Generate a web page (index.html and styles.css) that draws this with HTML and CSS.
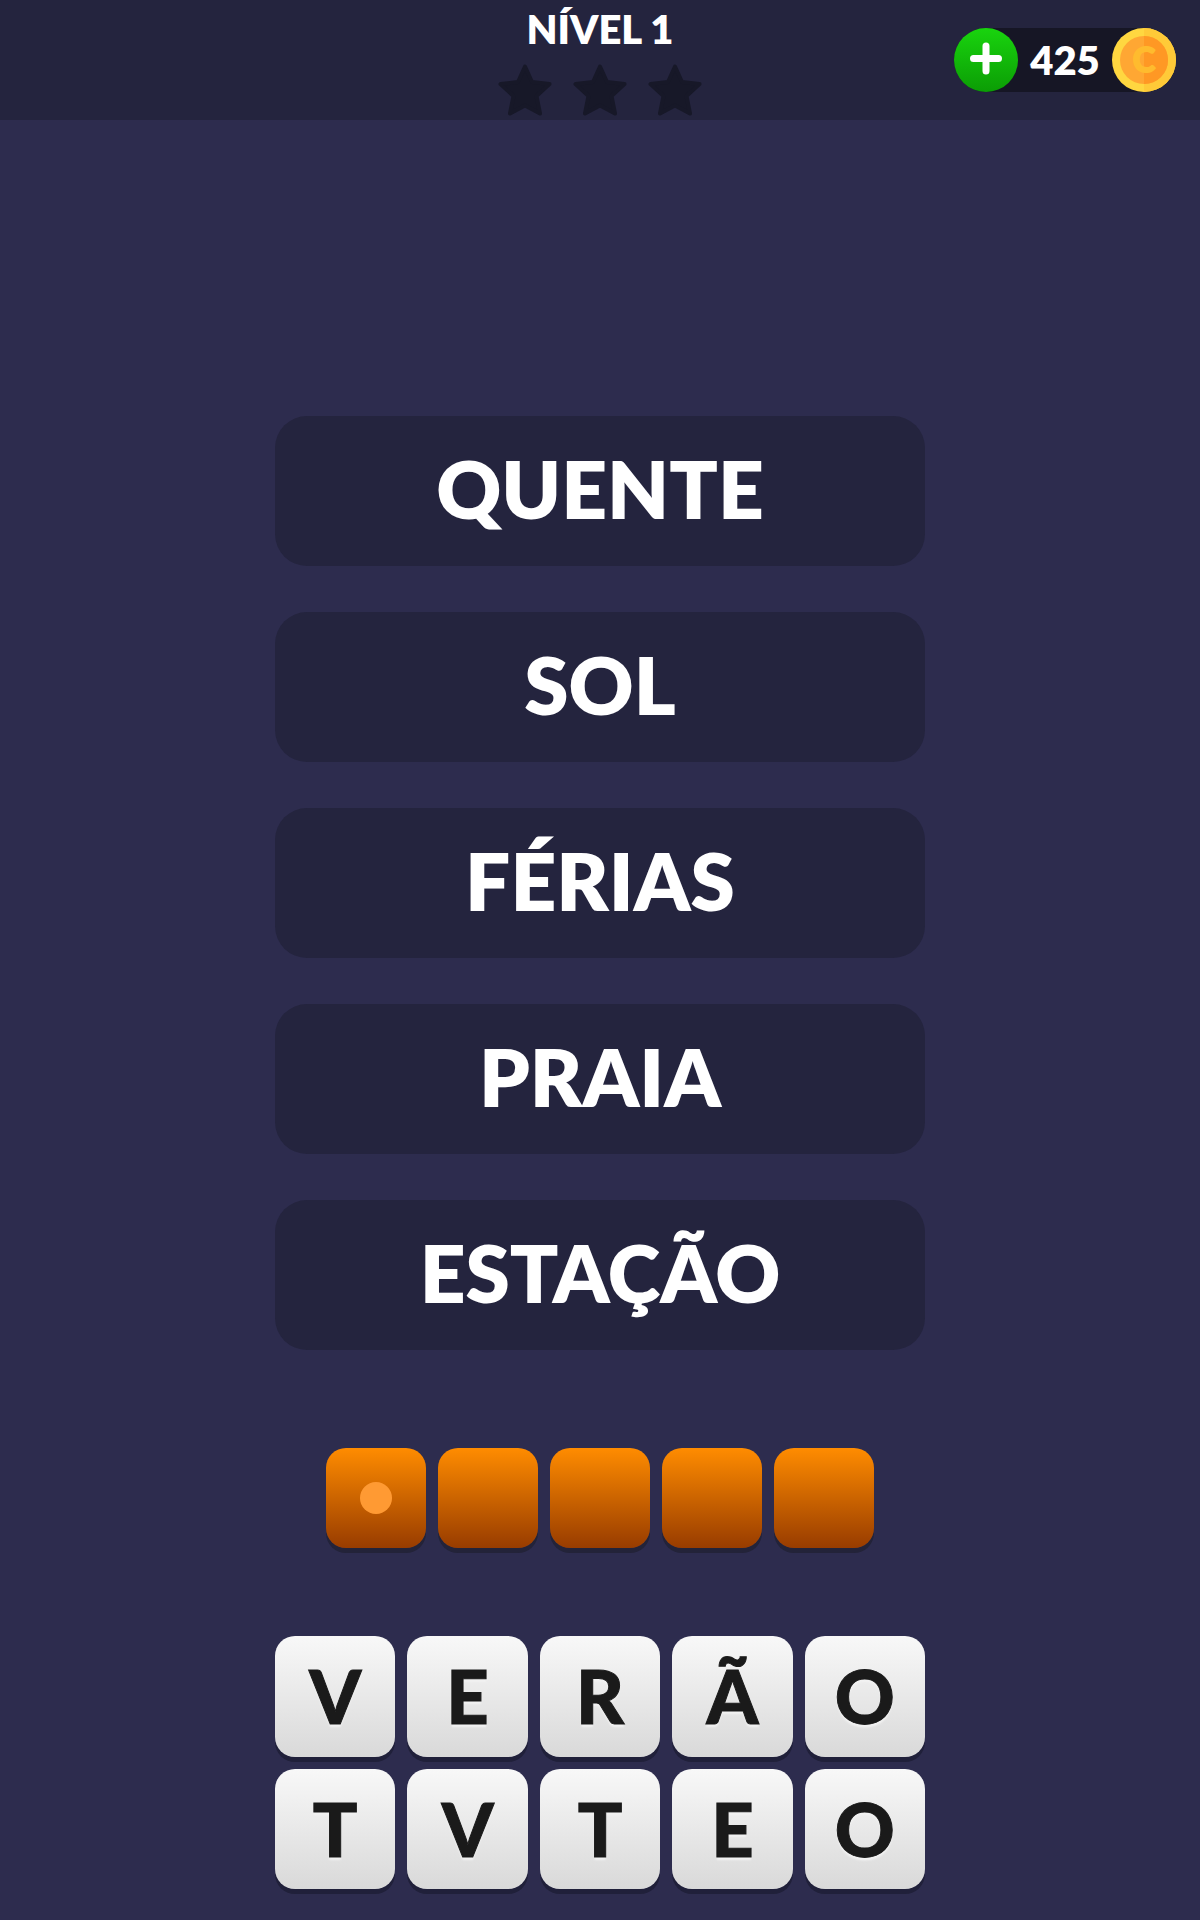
FILE: index.html
```html
<!DOCTYPE html>
<html lang="pt">
<head>
  <meta charset="UTF-8">
  <meta name="viewport" content="width=device-width, initial-scale=1">
  <title>Nível 1</title>
  <link rel="stylesheet" href="styles.css">
</head>
<body>

  <svg class="defs" aria-hidden="true">
    <symbol id="star" viewBox="0 0 54 52">
      <path d="M27 2.5 L34 18 L51.5 20 L38.500 32 L42 49.500 L27 41.500 L12 49.500 L15.500 32 L2.500 20 L20 18 Z" stroke-width="4" stroke-linejoin="round"/>
    </symbol>
  </svg>

  <header class="topbar">
    <div class="level">
      <h1 class="level-title">NÍVEL 1</h1>
      <div class="stars">
        <svg class="star"><use href="#star"/></svg>
        <svg class="star"><use href="#star"/></svg>
        <svg class="star"><use href="#star"/></svg>
      </div>
    </div>
    <div class="wallet">
      <button class="add" type="button" aria-label="Adicionar moedas">
        <svg viewBox="0 0 64 64"><path d="M32 18 V43 M19.500 30.500 H44.500"/></svg>
      </button>
      <span class="amount">425</span>
      <svg class="coin" viewBox="0 0 64 64">
        <circle cx="32" cy="32" r="32" fill="#ffd740"/>
        <path d="M32 0 A32 32 0 0 1 32 64 Z" fill="#ffca38"/>
        <circle cx="32" cy="32" r="24" fill="#ffa733"/>
        <path d="M32 8 A24 24 0 0 1 32 56 Z" fill="#ff9824"/>
        <text class="coin-letter" x="32" y="44">C</text>
      </svg>
    </div>
  </header>

  <main class="game">
    <ul class="words">
      <li class="word">QUENTE</li>
      <li class="word">SOL</li>
      <li class="word">FÉRIAS</li>
      <li class="word">PRAIA</li>
      <li class="word">ESTAÇÃO</li>
    </ul>

    <div class="slots">
      <div class="slot active"></div>
      <div class="slot"></div>
      <div class="slot"></div>
      <div class="slot"></div>
      <div class="slot"></div>
    </div>

    <div class="keys">
      <button class="key" type="button">V</button>
      <button class="key" type="button">E</button>
      <button class="key" type="button">R</button>
      <button class="key" type="button">Ã</button>
      <button class="key" type="button">O</button>
      <button class="key" type="button">T</button>
      <button class="key" type="button">V</button>
      <button class="key" type="button">T</button>
      <button class="key" type="button">E</button>
      <button class="key" type="button">O</button>
    </div>
  </main>

</body>
</html>
```

FILE: styles.css
```css
* { box-sizing: border-box; margin: 0; padding: 0; }
body {
  display: flex;
  flex-direction: column;
  min-height: 100vh;
  background: #2d2c4e;
  color: #fff;
  font-family: Lato, "Open Sans", sans-serif;
  font-weight: 800;
}
button {
  border: 0;
  font: inherit;
  cursor: pointer;
}
.defs {
  position: absolute;
  width: 0;
  height: 0;
}

/* top bar */
.topbar {
  display: grid;
  grid-template-columns: 1fr auto 1fr;
  height: 120px;
  padding: 0 24px;
  background: #24243e;
}
.level {
  grid-column: 2;
  display: flex;
  flex-direction: column;
  align-items: center;
  padding-top: 5px;
}
.level-title {
  font-size: 40px;
  line-height: 48px;
  font-weight: 800;
}
.stars {
  display: flex;
  gap: 21px;
  margin-top: 11px;
}
.star {
  width: 54px;
  height: 52px;
  fill: #171828;
  stroke: #171828;
}
.wallet {
  display: flex;
  align-items: center;
  justify-content: space-between;
  align-self: center;
  justify-self: end;
  width: 222px;
  height: 64px;
  border-radius: 32px;
  background: #161625;
}
.add {
  width: 64px;
  height: 64px;
  border-radius: 50%;
  background: linear-gradient(#19d40e, #0b9d05);
}
.add svg {
  display: block;
  fill: none;
  stroke: #fff;
  stroke-width: 7;
  stroke-linecap: round;
}
.amount {
  font-size: 40px;
  line-height: 48px;
}
.coin {
  width: 64px;
  height: 64px;
}
.coin-letter {
  fill: #ffbb2e;
  stroke: #ffbb2e;
  stroke-width: 2;
  stroke-linejoin: round;
  font-size: 34px;
  font-weight: 700;
  text-anchor: middle;
}

/* board */
.game {
  flex: 1;
  display: flex;
  flex-direction: column;
  align-items: center;
  justify-content: flex-end;
  padding: 31px 24px;
}
.words {
  display: flex;
  flex-direction: column;
  gap: 46px;
  width: 100%;
  max-width: 650px;
  list-style: none;
}
.word {
  height: 150px;
  padding-bottom: 6px;
  border-radius: 32px;
  background: #24243e;
  font-size: 80px;
  line-height: 144px;
  text-align: center;
}
.slots {
  display: flex;
  gap: 12px;
  margin: 98px 0 88px;
}
.slot {
  display: flex;
  align-items: center;
  justify-content: center;
  width: 100px;
  height: 100px;
  border-radius: 20px;
  background: linear-gradient(#ff8c00, #983c00);
  box-shadow: 0 5px 0 #232339;
}
.slot.active::before {
  content: "";
  width: 32px;
  height: 32px;
  border-radius: 50%;
  background: #ff9a33;
}
.keys {
  display: grid;
  grid-template-columns: repeat(5, 1fr);
  gap: 12px;
  width: 100%;
  max-width: 650px;
}
.key {
  aspect-ratio: 1;
  border-radius: 20px;
  background: linear-gradient(#f8f8f8, #d9d9d9);
  box-shadow: 0 5px 0 #20203a;
  color: #1a1a1a;
  font-size: 74px;
  font-weight: 900;
  line-height: 92px;
  text-shadow: 0 3px 2px #f2f2f2;
  -webkit-text-stroke: 1px #1a1a1a;
}
```
